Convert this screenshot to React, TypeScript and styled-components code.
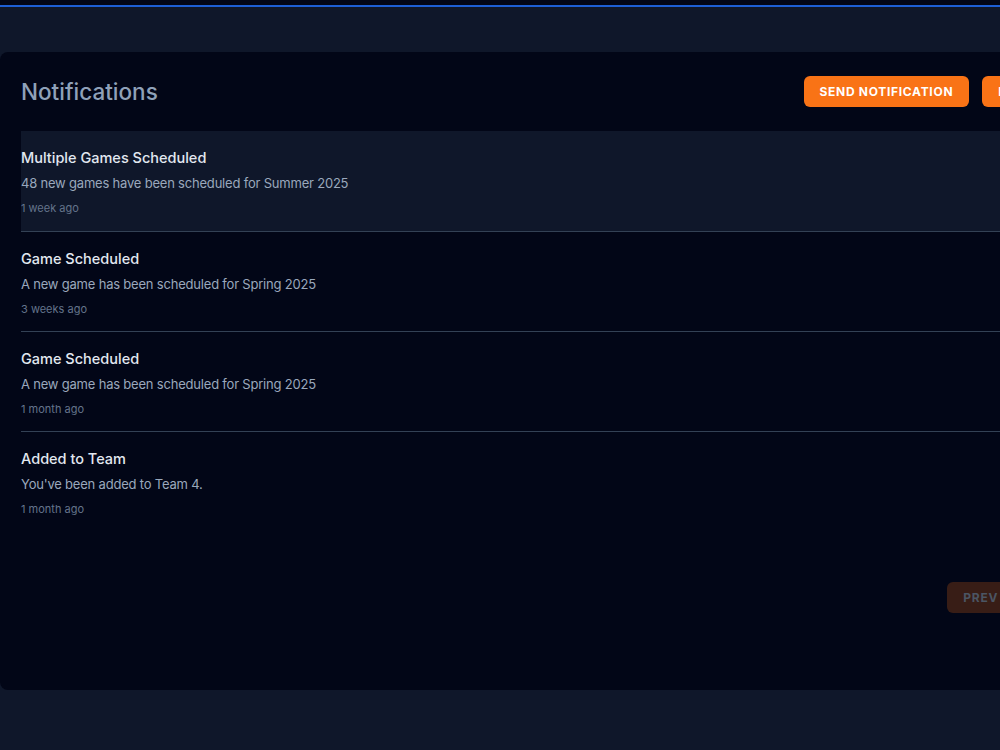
import React from "react";
import styled, { createGlobalStyle } from "styled-components";

const Global = createGlobalStyle`
  html, body { margin: 0; padding: 0; overflow: hidden; }
  body { background: #0f172a; font-family: Inter, "Liberation Sans", sans-serif; }
  * { box-sizing: border-box; }
`;

const Page = styled.div`
  width: 1000px;
  height: 750px;
  overflow: hidden;
  background: #0f172a;
  display: flex;
  flex-direction: column;
`;

const TopBar = styled.div`
  height: 7px;
  background: #020617;
  border-bottom: 2px solid #1d5fd6;
  flex-shrink: 0;
`;

const Main = styled.main`
  padding-top: 45px;
`;

const Card = styled.section`
  width: 1142px;
  height: 638px;
  background: #020617;
  border-radius: 8px;
  padding: 24px 21px;
  display: flex;
  flex-direction: column;
`;

const Header = styled.header`
  display: flex;
  align-items: center;
  justify-content: space-between;
  height: 31px;
  margin-bottom: 24px;
`;

const Title = styled.h1`
  margin: 0;
  font-size: 22.5px;
  font-weight: 500;
  color: #8fa1b9;
`;

const Actions = styled.div`
  display: flex;
  gap: 13px;
`;

const Button = styled.button<{ $disabled?: boolean }>`
  height: 31px;
  padding: 0 16px;
  border: none;
  border-radius: 6px;
  background: ${(p) => (p.$disabled ? "rgba(249,115,22,0.22)" : "#f97316")};
  color: ${(p) => (p.$disabled ? "#4b5563" : "#ffffff")};
  font-family: Inter, "Liberation Sans", sans-serif;
  font-size: 12px;
  font-weight: 700;
  letter-spacing: 0.7px;
  text-transform: uppercase;
  white-space: nowrap;
  cursor: pointer;
`;

const List = styled.ul`
  list-style: none;
  margin: 0;
  padding: 0;
`;

const Item = styled.li<{ $unread?: boolean; $last?: boolean }>`
  height: ${(p) => (p.$unread ? "101px" : "100px")};
  padding-top: 17px;
  background: ${(p) => (p.$unread ? "#0f172a" : "transparent")};
  border-bottom: ${(p) => (p.$last ? "none" : "1px solid #334155")};
  display: flex;
  flex-direction: column;
`;

const ItemTitle = styled.div`
  font-size: 14.5px;
  font-weight: 500;
  color: #e2e8f0;
  line-height: 20px;
`;

const ItemText = styled.div`
  font-size: 13px;
  letter-spacing: -0.2px;
  color: #9aa8bc;
  line-height: 20px;
  margin-top: 5px;
`;

const ItemTime = styled.div`
  font-size: 11px;
  color: #64748b;
  line-height: 16px;
  margin-top: 7px;
`;

const Pagination = styled.nav`
  display: flex;
  justify-content: flex-end;
  align-items: center;
  gap: 17px;
  margin-top: 50px;
`;

const PageInfo = styled.span`
  font-size: 13px;
  color: #94a3b8;
`;

const notifications = [
  { title: "Multiple Games Scheduled", text: "48 new games have been scheduled for Summer 2025", time: "1 week ago", unread: true },
  { title: "Game Scheduled", text: "A new game has been scheduled for Spring 2025", time: "3 weeks ago" },
  { title: "Game Scheduled", text: "A new game has been scheduled for Spring 2025", time: "1 month ago" },
  { title: "Added to Team", text: "You've been added to Team 4.", time: "1 month ago" },
];

export default function App() {
  return (
    <>
      <Global />
      <Page>
        <TopBar />
        <Main>
          <Card>
            <Header>
              <Title>Notifications</Title>
              <Actions>
                <Button>Send Notification</Button>
                <Button>Mark All Read</Button>
              </Actions>
            </Header>
            <List>
              {notifications.map((n, i) => (
                <Item key={i} $unread={n.unread} $last={i === notifications.length - 1}>
                  <ItemTitle>{n.title}</ItemTitle>
                  <ItemText>{n.text}</ItemText>
                  <ItemTime>{n.time}</ItemTime>
                </Item>
              ))}
            </List>
            <Pagination>
              <Button $disabled>Prev</Button>
              <PageInfo>1</PageInfo>
              <Button $disabled>Next</Button>
            </Pagination>
          </Card>
        </Main>
      </Page>
    </>
  );
}
